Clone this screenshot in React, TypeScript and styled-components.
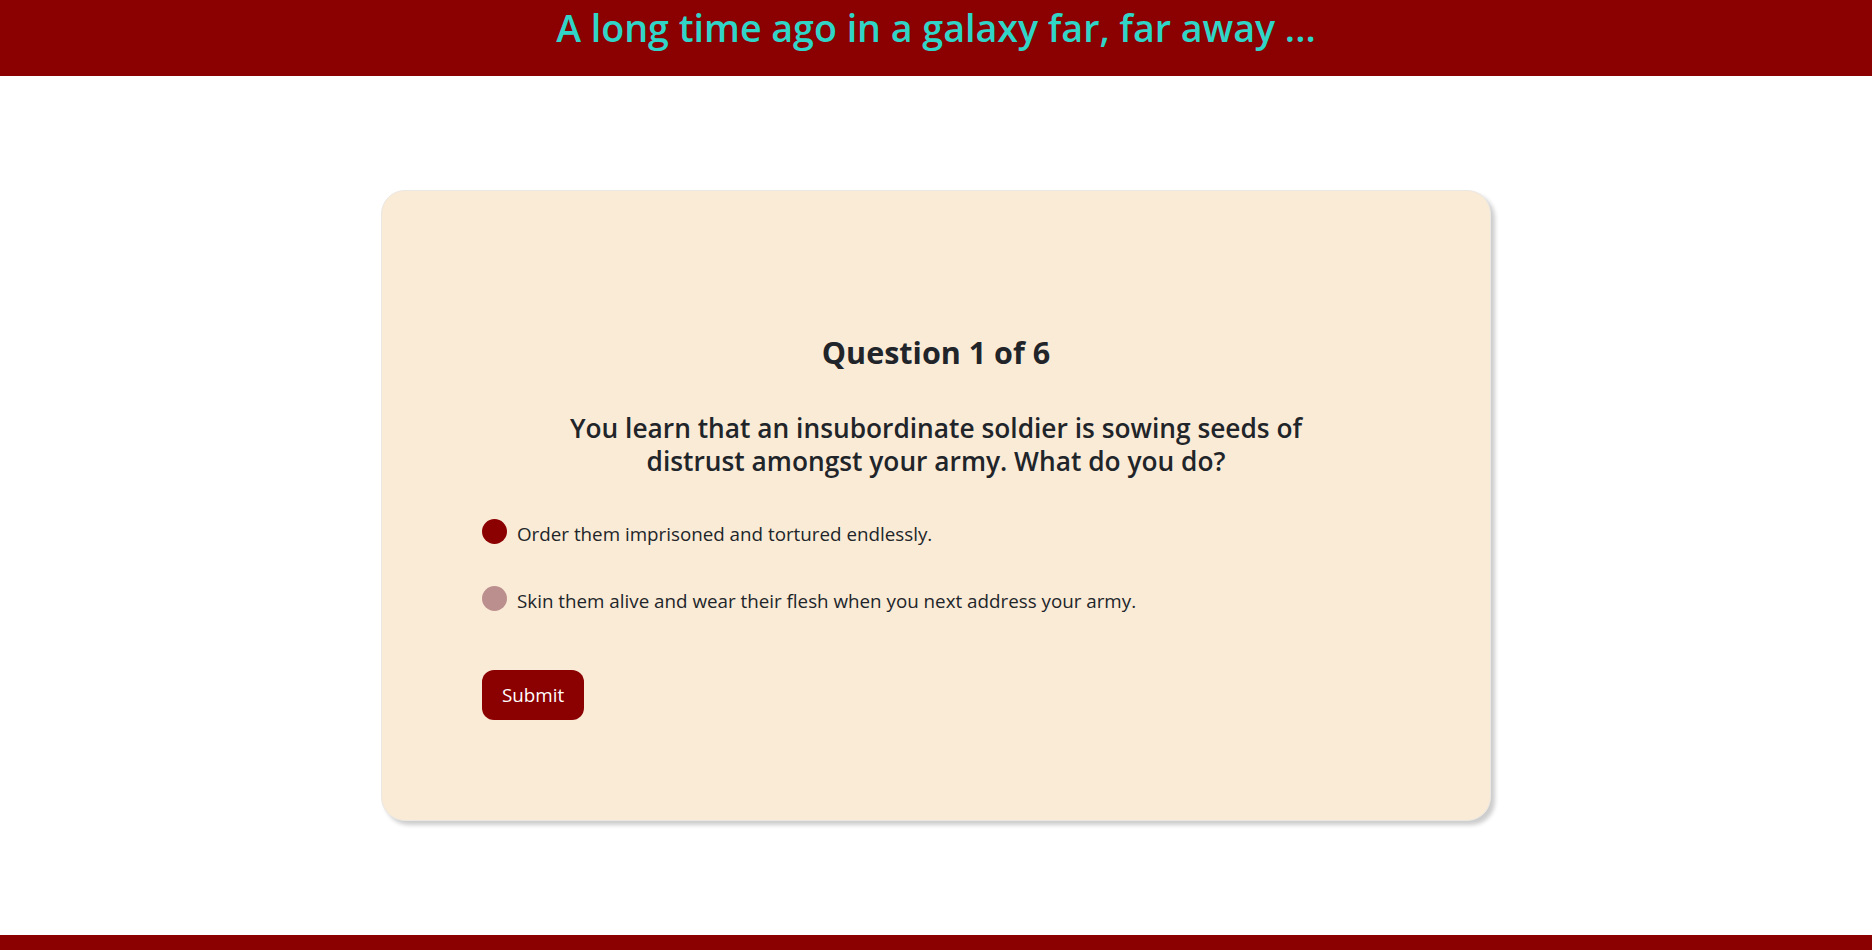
import React, { useState } from "react";
import styled, { createGlobalStyle } from "styled-components";

const GlobalStyle = createGlobalStyle`
  html, body { margin: 0; padding: 0; background: #ffffff; }
  body {
    font-family: "Open Sans", "Noto Sans", "Liberation Sans", sans-serif;
    color: #212529;
  }
  * { box-sizing: border-box; }
`;

const Page = styled.div`
  min-height: 100vh;
  display: flex;
  flex-direction: column;
`;

const Header = styled.header`
  height: 76px;
  background: #8b0000;
  display: flex;
  justify-content: center;
  padding-top: 4px;
`;

const Title = styled.h1`
  margin: 0;
  font-size: 37.6px;
  line-height: 48px;
  font-weight: 600;
  color: #30d5c8;
`;

const Main = styled.main`
  flex: 1;
  display: flex;
  align-items: center;
  justify-content: center;
`;

const Card = styled.section`
  width: 1110px;
  background: #faebd7;
  border: 1px solid #ebe7e2;
  border-radius: 24px;
  box-shadow: 4px 4px 4px rgba(0, 0, 0, 0.2);
  padding: 142px 100px 100px;
  display: flex;
  flex-direction: column;
`;

const Heading = styled.h2`
  margin: 0;
  text-align: center;
  font-size: 30.5px;
  line-height: 38.4px;
  font-weight: 700;
`;

const QuestionText = styled.h3`
  margin: 40px auto 0;
  max-width: 760px;
  text-align: center;
  font-size: 26.3px;
  line-height: 33.6px;
  font-weight: 600;
`;

const Options = styled.div`
  margin-top: 40px;
  display: flex;
  flex-direction: column;
  gap: 37px;
`;

const OptionRow = styled.label`
  display: flex;
  align-items: flex-start;
  gap: 10px;
  font-size: 18.8px;
  line-height: 30px;
  cursor: pointer;
`;

const Radio = styled.input.attrs({ type: "radio" })`
  appearance: none;
  margin: 0;
  width: 25px;
  height: 25px;
  border-radius: 50%;
  background: #bc8f8f;
  flex: none;
  cursor: pointer;
  &:checked { background: #8b0000; }
`;

const SubmitButton = styled.button`
  margin-top: 54px;
  align-self: flex-start;
  height: 50px;
  padding: 0 20px;
  border: none;
  border-radius: 12px;
  background: #8b0000;
  color: #ffffff;
  font-family: inherit;
  font-size: 18.8px;
  cursor: pointer;
`;

const Footer = styled.footer`
  height: 15px;
  background: #8b0000;
`;

const options = [
  "Order them imprisoned and tortured endlessly.",
  "Skin them alive and wear their flesh when you next address your army.",
];

export default function App() {
  const [selected, setSelected] = useState(0);
  return (
    <Page>
      <GlobalStyle />
      <Header>
        <Title>A long time ago in a galaxy far, far away ...</Title>
      </Header>
      <Main>
        <Card>
          <Heading>Question 1 of 6</Heading>
          <QuestionText>
            You learn that an insubordinate soldier is sowing seeds of distrust amongst your army. What do you do?
          </QuestionText>
          <Options>
            {options.map((o, i) => (
              <OptionRow key={i}>
                <Radio name="answer" checked={selected === i} onChange={() => setSelected(i)} />
                <span>{o}</span>
              </OptionRow>
            ))}
          </Options>
          <SubmitButton>Submit</SubmitButton>
        </Card>
      </Main>
      <Footer />
    </Page>
  );
}
